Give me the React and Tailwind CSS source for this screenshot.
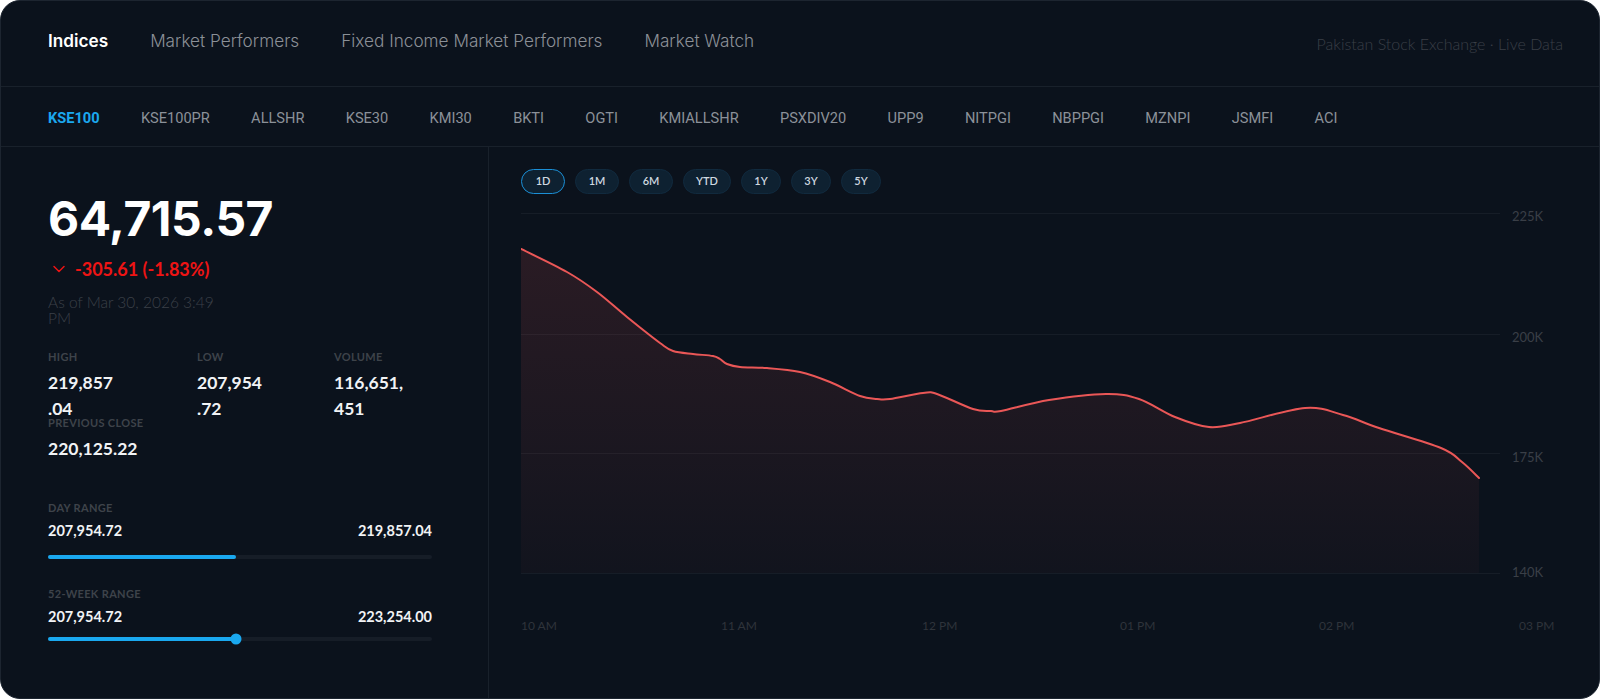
import React from 'react'
import { ChevronDown } from 'lucide-react'

const navItems = ['Indices', 'Market Performers', 'Fixed Income Market Performers', 'Market Watch']
const indexTabs = ['KSE100', 'KSE100PR', 'ALLSHR', 'KSE30', 'KMI30', 'BKTI', 'OGTI', 'KMIALLSHR', 'PSXDIV20', 'UPP9', 'NITPGI', 'NBPPGI', 'MZNPI', 'JSMFI', 'ACI']
const periods = [['1D', 'w-[44px]'], ['1M', 'w-[44px]'], ['6M', 'w-[44px]'], ['YTD', 'w-[48px]'], ['1Y', 'w-[40px]'], ['3Y', 'w-[40px]'], ['5Y', 'w-[40px]']]

// chart coords, origin at the left end of the top gridline area
const points = [
  [0, 49], [46, 72], [76, 92], [106, 117], [139, 143], [152, 151], [172, 154], [192, 156],
  [199, 159], [206, 164], [219, 167], [246, 168], [279, 172], [309, 182], [339, 196],
  [356, 199], [369, 199], [402, 193], [416, 194], [452, 209], [470, 211], [480, 211],
  [528, 200], [585, 194], [618, 199], [654, 217], [688, 227], [719, 223], [784, 208],
  [822, 215], [858, 228], [920, 248], [941, 262], [958, 278],
]

const gridY = [13, 134, 253, 373]
const yLabels = [['225K', 17], ['200K', 138], ['175K', 258], ['140K', 373]]
const xLabels = [['10 AM', 0], ['11 AM', 200], ['12 PM', 401], ['01 PM', 599], ['02 PM', 798], ['03 PM', 998]]

function smoothPath(pts) {
  let d = `M${pts[0][0]},${pts[0][1]}`
  for (let i = 0; i < pts.length - 1; i++) {
    const p0 = pts[i - 1] || pts[i]
    const p1 = pts[i]
    const p2 = pts[i + 1]
    const p3 = pts[i + 2] || p2
    const c1x = p1[0] + (p2[0] - p0[0]) / 6
    const c1y = p1[1] + (p2[1] - p0[1]) / 6
    const c2x = p2[0] - (p3[0] - p1[0]) / 6
    const c2y = p2[1] - (p3[1] - p1[1]) / 6
    d += ` C${c1x.toFixed(1)},${c1y.toFixed(1)} ${c2x.toFixed(1)},${c2y.toFixed(1)} ${p2[0]},${p2[1]}`
  }
  return d
}

const Stat = ({ label, lines }) => (
  <div>
    <div className="text-[11px] leading-[16px] font-bold tracking-[0.03em] text-[#3e434a]">{label}</div>
    <div className="mt-[5px] text-[17.5px] leading-[26px] font-bold text-[#f1f3f5]">
      {lines.map((l, i) => <div key={i}>{l}</div>)}
    </div>
  </div>
)

const RangeBar = ({ label, low, high, pct, knob }) => (
  <div>
    <div className="text-[11px] leading-[16px] font-bold tracking-[0.03em] text-[#3e434a]">{label}</div>
    <div className="flex justify-between mt-[5px] text-[14.5px] leading-[20px] font-bold text-[#f1f3f5]">
      <span>{low}</span>
      <span>{high}</span>
    </div>
    <div className={`relative h-[4px] rounded-full bg-[#161d27] ${knob ? 'mt-[10px]' : 'mt-[14px]'}`}>
      <div className="h-full rounded-full bg-[#1aa8ef]" style={{ width: pct + '%' }}></div>
      {knob && (
        <div className="absolute top-1/2 -translate-y-1/2 -translate-x-1/2 w-[11px] h-[11px] rounded-full bg-[#1aa8ef]" style={{ left: pct + '%' }}></div>
      )}
    </div>
  </div>
)

const Chart = () => {
  const line = smoothPath(points)
  const last = points[points.length - 1]
  const area = `${line} L${last[0]},373 L0,373 Z`
  return (
    <svg width="1079" height="440" viewBox="0 0 1079 440" className="block" fontFamily="Lato, 'Open Sans', sans-serif">
      <defs>
        <linearGradient id="area" x1="0" y1="0" x2="0" y2="1">
          <stop offset="0%" stopColor="#e85555" stopOpacity="0.14" />
          <stop offset="100%" stopColor="#e85555" stopOpacity="0.03" />
        </linearGradient>
      </defs>
      {gridY.map(y => (
        <line key={y} x1="0" x2="979" y1={y + 0.5} y2={y + 0.5} stroke="#161d27" strokeWidth="1" />
      ))}
      <path d={area} fill="url(#area)" />
      <path d={line} fill="none" stroke="#ea5757" strokeWidth="2" strokeLinecap="round" />
      {yLabels.map(([t, y]) => (
        <text key={t} x="991" y={y + 4} fontSize="13" fill="#3a3f47">{t}</text>
      ))}
      {xLabels.map(([t, x]) => (
        <text key={t} x={x} y="430" fontSize="12" fill="#2f343b">{t}</text>
      ))}
    </svg>
  )
}

export default function App() {
  return (
    <div className="w-full h-[699px] bg-white" style={{ fontFamily: 'Lato, "Open Sans", sans-serif' }}>
      <div className="h-full rounded-[20px] border border-[#1d2530] bg-[#0b121c] overflow-hidden flex flex-col">
        {/* top nav */}
        <div className="h-[86px] shrink-0 flex items-center justify-between border-b border-[#19212b] pl-[47px] pr-[36px]">
          <div className="flex items-center gap-[42px] pb-[5px] font-['Inter',sans-serif] text-[17.2px]">
            {navItems.map((n, i) => (
              <span key={n} className={i === 0 ? 'text-white font-semibold' : 'text-[#8b9097] font-light'}>{n}</span>
            ))}
          </div>
          <div className="text-[16px] text-[#3a3f47] font-light">Pakistan Stock Exchange · Live Data</div>
        </div>

        {/* index tabs */}
        <div className="h-[60px] shrink-0 flex items-center gap-[41.3px] border-b border-[#19212b] pl-[47px] pt-[5px] font-['Roboto',sans-serif] text-[14.6px]">
          {indexTabs.map((t, i) => (
            <span key={t} className={i === 0 ? 'text-[#1ba8ee] font-bold' : 'text-[#8b9199]'}>{t}</span>
          ))}
        </div>

        <div className="flex flex-1 min-h-0">
          {/* left summary */}
          <div className="w-[488px] shrink-0 border-r border-[#19212b] pl-[47px] pr-[56px] pt-[48px]">
            <div className="font-['Inter',sans-serif] font-bold text-[48px] leading-[48px] text-white tracking-[-0.01em]">64,715.57</div>
            <div className="mt-[14px] flex items-center gap-[6px] text-[18px] leading-[24px] font-bold text-[#ee1414]">
              <ChevronDown size={20} strokeWidth={1.8} className="ml-[1px]" />
              <span>-305.61 (-1.83%)</span>
            </div>
            <div className="mt-[13px] text-[15.5px] leading-[16px] text-[#3b4048] font-light">
              As of Mar 30, 2026 3:49<br />PM
            </div>

            <div className="mt-[23px] h-[66px] grid grid-cols-[149px_137px_1fr]">
              <Stat label="HIGH" lines={['219,857', '.04']} />
              <Stat label="LOW" lines={['207,954', '.72']} />
              <Stat label="VOLUME" lines={['116,651,', '451']} />
            </div>
            <Stat label="PREVIOUS CLOSE" lines={['220,125.22']} />

            <div className="mt-[38px]">
              <RangeBar label="DAY RANGE" low="207,954.72" high="219,857.04" pct={49} />
            </div>
            <div className="mt-[27px]">
              <RangeBar label="52-WEEK RANGE" low="207,954.72" high="223,254.00" pct={49} knob />
            </div>
          </div>

          {/* chart */}
          <div className="flex-1 pl-[32px] pt-[22px]">
            <div className="flex gap-[10px]">
              {periods.map(([p, w], i) => (
                <button
                  key={p}
                  className={`h-[25px] ${w} rounded-full text-[11px] font-semibold text-[#cfd8e0] bg-[#0e2131] border ${i === 0 ? 'border-[#1b8fd6]' : 'border-[#112a3e]'}`}
                >
                  {p}
                </button>
              ))}
            </div>
            <div className="mt-[6px]">
              <Chart />
            </div>
          </div>
        </div>
      </div>
    </div>
  )
}
